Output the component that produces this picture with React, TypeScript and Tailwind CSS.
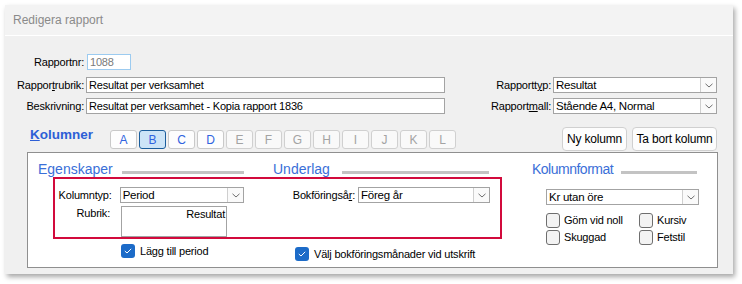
import React from "react";

function Chevron() {
  return (
    <svg width="8" height="5" viewBox="0 0 8 5">
      <path d="M0.5 0.8 L4 4 L7.5 0.8" fill="none" stroke="#6f6f6f" strokeWidth="1" />
    </svg>
  );
}

function Select({ text, className }: { text: string; className: string }) {
  return (
    <div className={"h-[16px] bg-white border border-[#a3a3a3] flex items-stretch " + className}>
      <div className="flex-1 pl-[2px] leading-[14px] text-[11.5px] tracking-[-0.25px] text-black whitespace-nowrap overflow-hidden">{text}</div>
      <div className="w-[16px] border-l border-[#cfcfcf] bg-[#fafafa] flex items-center justify-center">
        <Chevron />
      </div>
    </div>
  );
}

function CheckOn() {
  return (
    <div className="w-[14px] h-[14px] rounded-[3px] bg-[#1c6bc8] flex items-center justify-center shrink-0">
      <svg width="8" height="6" viewBox="0 0 8 6">
        <path d="M0.8 3 L3 5 L7.2 0.8" fill="none" stroke="#ffffff" strokeWidth="1" />
      </svg>
    </div>
  );
}

function CheckOff() {
  return <div className="w-[14px] h-[15px] rounded-[3px] border border-[#6e6e6e] bg-[#f3f3f3] shrink-0" />;
}

const tabs = ["A", "B", "C", "D", "E", "F", "G", "H", "I", "J", "K", "L"];

export default function App() {
  return (
    <div className="w-[742px] h-[284px] bg-white pt-[5px] pl-[5px] font-['Liberation_Sans',Arial,sans-serif] text-[11px] tracking-[-0.2px] text-black">
      <div className="w-[728px] h-[269px] bg-[#f0f0f0] shadow-[2px_3px_5px_rgba(0,0,0,0.35)] flex flex-col">
        {/* title bar */}
        <div className="h-[31px] bg-[#f3f3f3] border-b border-white pl-[8px] flex items-center text-[12px] tracking-normal text-[#8a8a8a]">
          Redigera rapport
        </div>

        {/* row 1 */}
        <div className="mt-[18px] h-[16px] flex items-center">
          <div className="w-[79px] text-right leading-[16px]">Rapportnr:</div>
          <div className="ml-[3px] w-[44px] h-[16px] bg-white border border-[#9ccbf0] pl-[2px] leading-[14px] text-[#7a7a7a]">1088</div>
        </div>

        {/* row 2 */}
        <div className="mt-[7px] h-[16px] flex items-center">
          <div className="w-[79px] text-right leading-[16px]">
            Rappor<span className="underline">t</span>rubrik:
          </div>
          <div className="ml-[2px] w-[359px] h-[16px] bg-white border border-[#a3a3a3] pl-[2px] leading-[14px]">Resultat per verksamhet</div>
          <div className="w-[106px] text-right leading-[16px]">
            Rapportt<span className="underline">y</span>p:
          </div>
          <Select text="Resultat" className="ml-[2px] w-[164px]" />
        </div>

        {/* row 3 */}
        <div className="mt-[5px] h-[16px] flex items-center">
          <div className="w-[79px] text-right leading-[16px]">Beskrivning:</div>
          <div className="ml-[2px] w-[359px] h-[16px] bg-white border border-[#a3a3a3] pl-[2px] leading-[14px] whitespace-nowrap">
            Resultat per verksamhet - Kopia rapport 1836
          </div>
          <div className="w-[106px] text-right leading-[16px]">
            Rapport<span className="underline">m</span>all:
          </div>
          <Select text="Stående A4, Normal" className="ml-[2px] w-[164px]" />
        </div>

        {/* Kolumner row */}
        <div className="mt-[13px] h-[25px] flex items-start">
          <div className="ml-[25px] w-[80px] text-[13.5px] tracking-normal font-bold leading-[16px] text-[#2d5fd6]">
            <span className="underline">K</span>olumner
          </div>
          <div className="mt-[3px] flex gap-[2px] tracking-normal">
            {tabs.map((t, i) => (
              <div
                key={t}
                className={
                  i === 1
                    ? "w-[27px] h-[19px] rounded-[3px] border border-[#1a5d9c] bg-[#cce4f7] flex items-center justify-center text-[12px] text-[#2f63e0]"
                    : i < 4
                    ? "w-[27px] h-[19px] rounded-[3px] border border-[#c9c9c9] bg-[#fdfdfd] flex items-center justify-center text-[12px] text-[#2f63e0]"
                    : "w-[27px] h-[19px] rounded-[3px] border border-[#d0d0d0] bg-[#f9f9f9] flex items-center justify-center text-[12px] text-[#a3a3a3]"
                }
              >
                {t}
              </div>
            ))}
          </div>
          <div className="ml-auto mr-[16px] flex gap-[5px]">
            <div className="w-[65px] h-[24px] rounded-[4px] border border-[#d0d0d0] bg-[#fdfdfd] flex items-center justify-center text-[12px]">
              Ny kolumn
            </div>
            <div className="w-[85px] h-[24px] rounded-[4px] border border-[#d0d0d0] bg-[#fdfdfd] flex items-center justify-center text-[12px]">
              Ta bort kolumn
            </div>
          </div>
        </div>

        {/* panel */}
        <div className="ml-[22px] w-[691px] h-[116px] border border-[#8f8f8f] bg-white relative flex pt-[7px]">
          {/* col 1 */}
          <div className="ml-[10px] w-[206px] flex flex-col">
            <div className="flex items-start h-[18px]">
              <div className="text-[14px] tracking-normal leading-[18px] text-[#3a6fd8] whitespace-nowrap">Egenskaper</div>
              <div className="flex-1 ml-[9px] mt-[11px] h-[3px] bg-[#c3c3c3]" />
            </div>
            <div className="mt-[9px] flex items-center h-[16px]">
              <div className="w-[74px] text-right leading-[16px]">Kolumntyp:</div>
              <Select text="Period" className="ml-[8px] w-[125px]" />
            </div>
            <div className="mt-[3px] flex items-start">
              <div className="w-[72px] text-right leading-[14px]">Rubrik:</div>
              <div className="ml-[11px] w-[106px] h-[31px] bg-white border border-[#a3a3a3] text-right pr-[1px] leading-[14px]">
                Resultat
              </div>
            </div>
            <div className="mt-[7px] ml-[83px] flex items-center gap-[5px] h-[14px]">
              <CheckOn />
              <span className="whitespace-nowrap leading-[14px]">Lägg till period</span>
            </div>
          </div>

          {/* col 2 */}
          <div className="ml-[29px] w-[217px] flex flex-col">
            <div className="flex items-start h-[18px]">
              <div className="text-[14px] tracking-normal leading-[18px] text-[#3a6fd8] whitespace-nowrap">Underlag</div>
              <div className="flex-1 ml-[12px] mr-[1px] mt-[11px] h-[3px] bg-[#c3c3c3]" />
            </div>
            <div className="mt-[9px] flex items-center h-[16px]">
              <div className="ml-[18px] w-[67px] pr-[3px] text-right leading-[16px] whitespace-nowrap">
                Bokföringså<span className="underline">r</span>:
              </div>
              <Select text="Föreg år" className="w-[132px]" />
            </div>
            <div className="mt-[44px] ml-[22px] flex items-center gap-[5px] h-[14px]">
              <CheckOn />
              <span className="whitespace-nowrap leading-[14px]">Välj bokföringsmånader vid utskrift</span>
            </div>
          </div>

          {/* col 3 */}
          <div className="ml-[42px] w-[167px] flex flex-col">
            <div className="flex items-start h-[18px]">
              <div className="text-[14px] tracking-[-0.5px] leading-[18px] text-[#3a6fd8] whitespace-nowrap">Kolumnformat</div>
              <div className="flex-1 ml-[8px] mr-[2px] mt-[11px] h-[3px] bg-[#c3c3c3]" />
            </div>
            <Select text="Kr utan öre" className="mt-[11px] ml-[14px] w-[153px]" />
            <div className="mt-[8px] ml-[14px] grid grid-cols-[93px_60px] gap-y-[2px]">
              <div className="flex items-center gap-[4px] h-[15px]">
                <CheckOff />
                <span className="whitespace-nowrap leading-[15px]">Göm vid noll</span>
              </div>
              <div className="flex items-center gap-[4px] h-[15px]">
                <CheckOff />
                <span className="whitespace-nowrap leading-[15px]">Kursiv</span>
              </div>
              <div className="flex items-center gap-[4px] h-[15px]">
                <CheckOff />
                <span className="whitespace-nowrap leading-[15px]">Skuggad</span>
              </div>
              <div className="flex items-center gap-[4px] h-[15px]">
                <CheckOff />
                <span className="whitespace-nowrap leading-[15px]">Fetstil</span>
              </div>
            </div>
          </div>

          {/* highlight */}
          <div className="absolute left-[25px] top-[24px] w-[449px] h-[62px] border-2 border-[#d20a3c] pointer-events-none" />
        </div>
      </div>
    </div>
  );
}
